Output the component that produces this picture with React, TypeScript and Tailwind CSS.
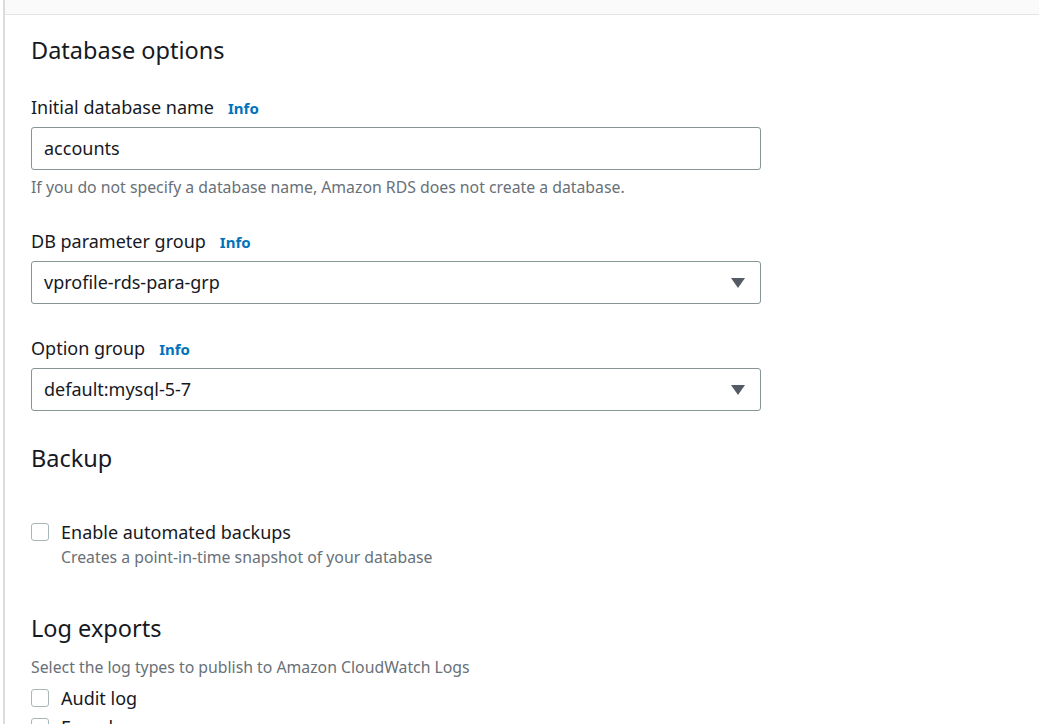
import React from 'react'

const font = { fontFamily: '"Noto Sans", "Open Sans", Arial, sans-serif' }

function Label({ text }: { text: string }) {
    return (
        <div className="flex items-baseline gap-[14px] h-[26px]">
            <span className="text-[18px] text-[#16191f]">{text}</span>
            <span className="text-[15px] font-bold text-[#0073bb]">Info</span>
        </div>
    )
}

function Select({ value }: { value: string }) {
    return (
        <div className="w-[730px] h-[43px] border border-[#879596] rounded-[3px] flex items-center justify-between pl-[12px] pr-[14px]">
            <span className="text-[18px] text-[#16191f]">{value}</span>
            <svg width="16" height="12" viewBox="0 0 16 12">
                <path d="M1 1 L15 1 L8 11 Z" fill="#545b64" />
            </svg>
        </div>
    )
}

function Checkbox({ label }: { label: string }) {
    return (
        <div className="flex items-center gap-[12px] h-[26px]">
            <span className="w-[18px] h-[18px] border border-[#aab7b8] rounded-[3px] bg-white" />
            <span className="text-[18px] text-[#16191f]">{label}</span>
        </div>
    )
}

export default function App() {
    return (
        <div className="w-[1039px] h-[724px] overflow-hidden bg-white" style={font}>
            <div className="ml-[3px] h-full border-l-2 border-[#dcdcdc]">
                <div className="h-[15px] bg-[#fafafa] border-b border-[#e4e4e4]" />
                <div className="pl-[26px]">
                    <h2 className="text-[23.5px] text-[#16191f] leading-[32px] mt-[19px]">Database options</h2>

                    <div className="mt-[28px]">
                        <Label text="Initial database name" />
                        <div className="mt-[7px] w-[730px] h-[43px] border border-[#879596] rounded-[3px] flex items-center pl-[12px]">
                            <span className="text-[18px] text-[#16191f]">accounts</span>
                        </div>
                        <p className="text-[15.8px] text-[#687078] mt-[6px] leading-[22px]">If you do not specify a database name, Amazon RDS does not create a database.</p>
                    </div>

                    <div className="mt-[30px]">
                        <Label text="DB parameter group" />
                        <div className="mt-[7px]"><Select value="vprofile-rds-para-grp" /></div>
                    </div>

                    <div className="mt-[31px]">
                        <Label text="Option group" />
                        <div className="mt-[7px]"><Select value="default:mysql-5-7" /></div>
                    </div>

                    <h2 className="text-[23.5px] text-[#16191f] leading-[32px] mt-[31px]">Backup</h2>

                    <div className="mt-[45px]">
                        <Checkbox label="Enable automated backups" />
                        <p className="pl-[30px] text-[15.8px] text-[#687078] leading-[22px] mt-[1px]">Creates a point-in-time snapshot of your database</p>
                    </div>

                    <h2 className="text-[23.5px] text-[#16191f] leading-[32px] mt-[44px]">Log exports</h2>
                    <p className="text-[15.8px] text-[#687078] leading-[22px] mt-[12px]">Select the log types to publish to Amazon CloudWatch Logs</p>
                    <div className="mt-[7px] flex flex-col gap-[3px]">
                        <Checkbox label="Audit log" />
                        <Checkbox label="Error log" />
                    </div>
                </div>
            </div>
        </div>
    )
}
